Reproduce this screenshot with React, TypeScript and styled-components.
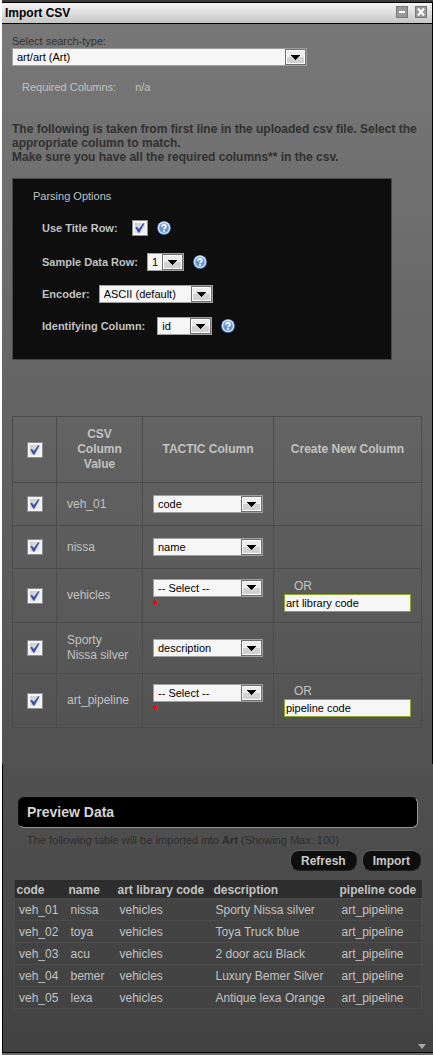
import React from "react";
import styled, { createGlobalStyle, css } from "styled-components";

const GlobalStyle = createGlobalStyle`
  *, *::before, *::after { box-sizing: border-box; }
  body {
    margin: 0;
    background: #fff;
    font-family: "Liberation Sans", Arial, sans-serif;
    font-size: 12px;
    line-height: 15px;
    color: #c2c2c2;
  }
  input, select, button { font-family: inherit; margin: 0; }
`;

const Window = styled.main`
  margin-left: 2px;
  border-top: 2px solid #3c3c3c;
  border-bottom: 2px solid #6a6a6a;
`;

const TitleBar = styled.header`
  display: flex;
  align-items: center;
  height: 22px;
  padding: 0 5px 0 3px;
  border: 1px solid #000;
  border-left: 0;
  background: linear-gradient(#f4f4f4, #c6c6c6);
`;

const Title = styled.h1`
  flex: 1;
  margin: 0;
  font-size: 12px;
  line-height: 18px;
  color: #000;
`;

const WindowButtons = styled.div`
  display: flex;
  gap: 7px;
`;

const WindowButton = styled.button`
  width: 12px;
  height: 12px;
  padding: 0;
  border: 1px solid #777;
  background: #999;
  margin-bottom: 3px;
  svg { display: block; }
`;

const Body = styled.div`
  background: linear-gradient(#787878, #424242);
`;

const Setup = styled.section`
  min-height: 740px;
  padding: 10px 10px 36px;
  border-right: 1px solid #000;
`;

const SearchLabel = styled.label`
  display: block;
  font-size: 11px;
  line-height: 14px;
  color: #343434;
`;

const SelectBox = styled.span<{ $width: number }>`
  display: inline-grid;
  width: ${(p) => p.$width}px;
  max-width: 100%;
  height: 18px;
  border: 1px solid #a0a0a0;
  background: #f6f6f6;
  vertical-align: top;
`;

const NativeSelect = styled.select`
  grid-area: 1 / 1;
  appearance: none;
  width: 100%;
  height: 16px;
  padding: 0 21px 0 4px;
  border: 0;
  border-radius: 0;
  background: transparent;
  font-size: 11px;
  line-height: 16px;
  color: #000;
`;

const SelectArrow = styled.span`
  grid-area: 1 / 1;
  justify-self: end;
  display: flex;
  align-items: center;
  justify-content: center;
  width: 21px;
  height: 16px;
  border: 1px solid #6e6e6e;
  box-shadow: inset 0 0 0 1px #fff;
  background: linear-gradient(#ededed 50%, #d2d2d2 50%);
  pointer-events: none;
`;

const Required = styled.dl`
  display: flex;
  gap: 19px;
  margin: 14px 0 0;
  padding-left: 10px;
  font-size: 11px;
  line-height: 14px;
  dd { margin: 0; }
`;

const Instructions = styled.p`
  margin: 28px 0 14px;
  font-size: 12px;
  line-height: 14px;
  font-weight: bold;
  color: #303030;
`;

const Options = styled.section`
  margin-right: 30px;
  min-height: 182px;
  padding: 10px 20px;
  border: 1px solid #484848;
  background: #0e0e0e;
`;

const OptionsTitle = styled.h2`
  margin: 0 0 16px;
  font-size: 11px;
  line-height: 14px;
  font-weight: normal;
`;

const OptionList = styled.div`
  display: flex;
  flex-direction: column;
  gap: 14px;
  padding-left: 9px;
`;

const OptionRow = styled.div<{ $tall?: boolean }>`
  display: flex;
  align-items: center;
  height: 18px;
  ${(p) => p.$tall && css`margin-bottom: 2px;`}
`;

const OptionLabel = styled.label<{ $gap: number }>`
  margin-right: ${(p) => p.$gap}px;
  font-size: 11px;
  font-weight: bold;
`;

const HelpButton = styled.button`
  margin-left: 9px;
  padding: 0;
  border: 0;
  background: none;
  svg { display: block; }
`;

const TickBox = styled.span`
  display: inline-grid;
  width: 16px;
  height: 16px;
  vertical-align: top;
  input {
    grid-area: 1 / 1;
    appearance: none;
    width: 16px;
    height: 16px;
    border: 1px solid #8d8d8d;
    background: linear-gradient(135deg, #bcc2cc, #fbfbfb);
    box-shadow: inset 0 0 0 2px #f4f4f4;
  }
  svg { grid-area: 1 / 1; pointer-events: none; visibility: hidden; }
  input:checked + svg { visibility: visible; }
`;

const Mapping = styled.table`
  width: 100%;
  margin-top: 56px;
  border-collapse: collapse;
  table-layout: fixed;
  th, td { border: 1px solid #4c4c4c; padding: 0 10px; text-align: left; }
  th { text-align: center; height: 66px; }
  th:first-child, td:first-child { text-align: center; padding: 0; }
`;

const MappingRow = styled.tr<{ $height: number }>`
  height: ${(p) => p.$height}px;
`;

const Choice = styled.div`
  display: flex;
  flex-direction: column;
`;

const Star = styled.span`
  height: 16px;
  font-size: 13px;
  font-weight: bold;
  line-height: 16px;
  color: #f00;
`;

const NewColumn = styled.label`
  display: flex;
  flex-direction: column;
  padding-bottom: 1px;
  span { padding-left: 10px; }
`;

const NewColumnInput = styled.input`
  width: 100%;
  height: 18px;
  padding: 0 1px;
  border: 1px solid #8ca52a;
  background: #f6f6f6;
  font-size: 11px;
  color: #000;
`;

const Preview = styled.section`
  padding: 33px 11px 3px;
  border-left: 1px solid #000;
  border-bottom: 1px solid #000;
`;

const PreviewTitle = styled.h2`
  margin: 0 4px;
  padding: 0 8px;
  border: 1px solid #0a0a0a;
  border-right-color: #999;
  border-bottom-color: #999;
  border-radius: 6px;
  background: #000;
  font-size: 14px;
  line-height: 29px;
  color: #d4d4d4;
`;

const PreviewNote = styled.p`
  margin: 5px 13px 3px;
  font-size: 11px;
  line-height: 14px;
  color: #2e2e2e;
`;

const Actions = styled.div`
  display: flex;
  justify-content: flex-end;
  gap: 5px;
  padding-right: 1px;
`;

const ActionButton = styled.button`
  height: 21px;
  padding: 0 10px;
  border: 1px solid #5e5e5e;
  border-right-color: #222;
  border-bottom-color: #222;
  border-radius: 9px;
  background: #0e0e0e;
  font-size: 12px;
  font-weight: bold;
  line-height: 18px;
  color: #c9c9c9;
`;

const DataTable = styled.table`
  width: 100%;
  margin-top: 9px;
  border-collapse: collapse;
  table-layout: fixed;
  background: #434343;
  white-space: nowrap;
  th { height: 18px; padding: 3px 0 0 2px; background: #2d2d2d; text-align: left; }
  td { height: 22px; padding: 2px 0 0 4px; }
  tbody tr { border: 1px solid #4c4c4c; }
`;

const Footer = styled.footer`
  display: flex;
  justify-content: flex-end;
  padding-top: 35px;
  margin-right: -4px;
`;

function Select({ id, label, width, value }: { id?: string; label?: string; width: number; value: string }) {
  return (
    <SelectBox $width={width}>
      <NativeSelect id={id} aria-label={label} defaultValue={value}>
        <option>{value}</option>
      </NativeSelect>
      <SelectArrow>
        <svg width="9" height="5" shapeRendering="crispEdges" aria-hidden="true">
          <path d="M0 0h9v1H8v1H7v1H6v1H5v1H4V4H3V3H2V2H1V1H0z" fill="#000" />
        </svg>
      </SelectArrow>
    </SelectBox>
  );
}

function Tick({ id, label }: { id?: string; label?: string }) {
  return (
    <TickBox>
      <input type="checkbox" id={id} aria-label={label} defaultChecked />
      <svg width="16" height="16" viewBox="0 0 16 16" aria-hidden="true">
        <path d="M3.3 7.6l1.6-.9 2 2.4 4.2-5.8 1.4.3-5.1 9.1H6.3z" fill="#3b519b" />
      </svg>
    </TickBox>
  );
}

function Help({ label }: { label: string }) {
  return (
    <HelpButton type="button" aria-label={label}>
      <svg width="14" height="14" viewBox="0 0 14 14" aria-hidden="true">
        <circle cx="7" cy="7" r="6.9" fill="#4273b3" />
        <circle cx="7" cy="6.8" r="6.3" fill="#d0e2f6" />
        <circle cx="7" cy="7" r="4.8" fill="#6796ce" />
        <path d="M5 5.7C5 3.3 9 3.3 9 5.5c0 1.3-2 1.4-2 2.8" fill="none" stroke="#fff" strokeWidth="1.7" />
        <rect x="6.1" y="9.2" width="1.8" height="1.6" fill="#fff" />
      </svg>
    </HelpButton>
  );
}

const mappings = [
  { csv: "veh_01", column: "code", height: 43 },
  { csv: "nissa", column: "name", height: 43 },
  { csv: "vehicles", column: "-- Select --", create: "art library code", height: 54 },
  { csv: "Sporty Nissa silver", column: "description", height: 51 },
  { csv: "art_pipeline", column: "-- Select --", create: "pipeline code", height: 54 },
];

const previewColumns = ["code", "name", "art library code", "description", "pipeline code"];

const previewRows = [
  ["veh_01", "nissa", "vehicles", "Sporty Nissa silver", "art_pipeline"],
  ["veh_02", "toya", "vehicles", "Toya Truck blue", "art_pipeline"],
  ["veh_03", "acu", "vehicles", "2 door acu Black", "art_pipeline"],
  ["veh_04", "bemer", "vehicles", "Luxury Bemer Silver", "art_pipeline"],
  ["veh_05", "lexa", "vehicles", "Antique lexa Orange", "art_pipeline"],
];

export default function App() {
  return (
    <>
      <GlobalStyle />
      <Window>
        <TitleBar>
          <Title>Import CSV</Title>
          <WindowButtons>
            <WindowButton type="button" aria-label="Minimize">
              <svg width="10" height="10"><rect x="2" y="4" width="6" height="2" fill="#fff" /></svg>
            </WindowButton>
            <WindowButton type="button" aria-label="Close">
              <svg width="10" height="10"><path d="M2 1.5l6 7M8 1.5l-6 7" stroke="#fff" strokeWidth="2" /></svg>
            </WindowButton>
          </WindowButtons>
        </TitleBar>
        <Body>
          <Setup>
            <SearchLabel htmlFor="search-type">Select search-type:</SearchLabel>
            <Select id="search-type" width={295} value="art/art (Art)" />
            <Required>
              <dt>Required Columns:</dt>
              <dd>n/a</dd>
            </Required>
            <Instructions>
              The following is taken from first line in the uploaded csv file. Select the
              <br />
              appropriate column to match.
              <br />
              Make sure you have all the required columns** in the csv.
            </Instructions>
            <Options>
              <OptionsTitle>Parsing Options</OptionsTitle>
              <OptionList>
                <OptionRow $tall>
                  <OptionLabel $gap={14} htmlFor="title-row">Use Title Row:</OptionLabel>
                  <Tick id="title-row" />
                  <Help label="About the title row" />
                </OptionRow>
                <OptionRow>
                  <OptionLabel $gap={9} htmlFor="sample-row">Sample Data Row:</OptionLabel>
                  <Select id="sample-row" width={37} value="1" />
                  <Help label="About the sample data row" />
                </OptionRow>
                <OptionRow>
                  <OptionLabel $gap={9} htmlFor="encoder">Encoder:</OptionLabel>
                  <Select id="encoder" width={114} value="ASCII (default)" />
                </OptionRow>
                <OptionRow>
                  <OptionLabel $gap={12} htmlFor="id-column">Identifying Column:</OptionLabel>
                  <Select id="id-column" width={55} value="id" />
                  <Help label="About the identifying column" />
                </OptionRow>
              </OptionList>
            </Options>
            <Mapping>
              <colgroup>
                <col style={{ width: "44px" }} />
                <col style={{ width: "86px" }} />
                <col style={{ width: "131px" }} />
                <col />
              </colgroup>
              <thead>
                <tr>
                  <th><Tick label="Select all columns" /></th>
                  <th>CSV Column Value</th>
                  <th>TACTIC Column</th>
                  <th>Create New Column</th>
                </tr>
              </thead>
              <tbody>
                {mappings.map((m) => (
                  <MappingRow key={m.csv} $height={m.height}>
                    <td><Tick label={m.csv} /></td>
                    <td>{m.csv}</td>
                    <td>
                      <Choice>
                        <Select label={`Column for ${m.csv}`} width={110} value={m.column} />
                        {m.create && <Star>*</Star>}
                      </Choice>
                    </td>
                    <td>
                      {m.create && (
                        <NewColumn>
                          <span>OR</span>
                          <NewColumnInput defaultValue={m.create} />
                        </NewColumn>
                      )}
                    </td>
                  </MappingRow>
                ))}
              </tbody>
            </Mapping>
          </Setup>
          <Preview>
            <PreviewTitle>Preview Data</PreviewTitle>
            <PreviewNote>
              The following table will be imported into <b>Art</b> (Showing Max: 100)
            </PreviewNote>
            <Actions>
              <ActionButton type="button">Refresh</ActionButton>
              <ActionButton type="button">Import</ActionButton>
            </Actions>
            <DataTable>
              <colgroup>
                <col style={{ width: "52px" }} />
                <col style={{ width: "49px" }} />
                <col style={{ width: "96px" }} />
                <col style={{ width: "126px" }} />
                <col />
              </colgroup>
              <thead>
                <tr>{previewColumns.map((c) => <th key={c}>{c}</th>)}</tr>
              </thead>
              <tbody>
                {previewRows.map((row) => (
                  <tr key={row[0]}>{row.map((cell, i) => <td key={i}>{cell}</td>)}</tr>
                ))}
              </tbody>
            </DataTable>
            <Footer>
              <svg width="8" height="5" aria-hidden="true"><path d="M0 0h8L4 5z" fill="#aaa" /></svg>
            </Footer>
          </Preview>
        </Body>
      </Window>
    </>
  );
}
